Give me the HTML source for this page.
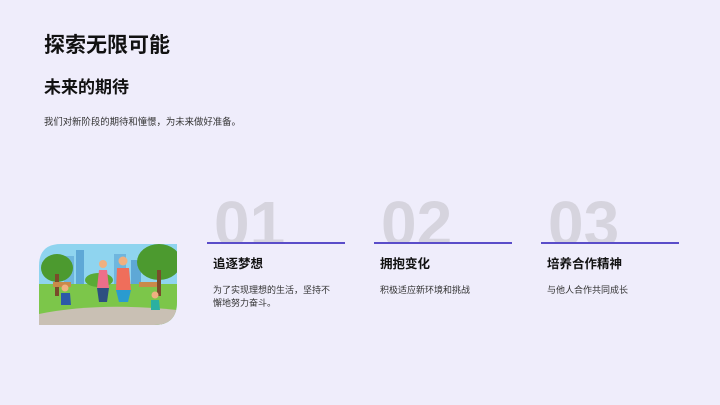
<!DOCTYPE html>
<html><head><meta charset="utf-8"><style>
body{margin:0;width:720px;height:405px;background:#efedfb;font-family:"Liberation Sans","Noto Sans CJK SC",sans-serif;position:relative;overflow:hidden;color:#111}
.a{position:absolute;white-space:nowrap}
h1{position:absolute;left:44px;top:31px;margin:0;font-size:21px;font-weight:bold;line-height:30px}
h2{position:absolute;left:44px;top:76px;margin:0;font-size:17px;font-weight:bold;line-height:24px}
.sub{left:44px;top:114px;font-size:9.4px;color:#333}
.col{position:absolute;top:190px;width:138px;height:130px}
.num{position:absolute;left:7px;top:4px;font-size:64px;font-weight:bold;color:#d6d4de;line-height:60px;height:48px;overflow:hidden;letter-spacing:0px}
.line{position:absolute;left:0;top:52px;width:138px;height:2px;background:#5a4dc9}
.t{position:absolute;left:6px;top:66px;font-size:12.5px;font-weight:bold;line-height:16px;white-space:nowrap}
.d{position:absolute;left:6px;top:94px;font-size:9px;line-height:13px;color:#333;width:125px}
</style></head><body>
<h1>探索无限可能</h1>
<h2>未来的期待</h2>
<div class="a sub">我们对新阶段的期待和憧憬，为未来做好准备。</div>

<svg style="position:absolute;left:39px;top:244px" width="138" height="81" viewBox="0 0 138 81">
<defs><clipPath id="c"><path d="M22 0H138V58Q138 81 115 81H0V22Q0 0 22 0Z"/></clipPath></defs>
<g clip-path="url(#c)">
<rect width="138" height="81" fill="#8fd4ef"/>
<rect x="25" y="12" width="10" height="30" fill="#6fb6de"/><rect x="37" y="6" width="8" height="36" fill="#5ea8d6"/><rect x="75" y="10" width="12" height="32" fill="#6fb6de"/><rect x="92" y="16" width="10" height="26" fill="#5ea8d6"/>
<rect x="0" y="40" width="138" height="41" fill="#7cc64a"/>
<ellipse cx="18" cy="24" rx="16" ry="14" fill="#4c9a2f"/><rect x="16" y="30" width="4" height="22" fill="#7a4b2a"/>
<ellipse cx="120" cy="18" rx="22" ry="18" fill="#4c9a2f"/><rect x="118" y="26" width="4" height="26" fill="#7a4b2a"/>
<ellipse cx="60" cy="36" rx="14" ry="7" fill="#5aaa35"/>
<path d="M0 70Q60 58 138 66V81H0Z" fill="#c9c0b4"/>
<rect x="14" y="38" width="18" height="5" fill="#c98a4a"/><rect x="100" y="38" width="18" height="5" fill="#c98a4a"/>
<circle cx="64" cy="20" r="4" fill="#f0b080"/><path d="M60 26h8l2 18h-12z" fill="#ec6f8a"/><path d="M58 44h12l-2 14h-8z" fill="#2e4f80"/>
<circle cx="84" cy="17" r="4.5" fill="#f0b080"/><path d="M78 24h12l2 22h-15z" fill="#ef6e5b"/><path d="M77 46h15l-3 12h-9z" fill="#2a9bd0"/>
<circle cx="26" cy="44" r="3.5" fill="#f0b080"/><path d="M22 49h9l1 12h-10z" fill="#2c5aa8"/>
<circle cx="116" cy="51" r="3.5" fill="#f0b080"/><path d="M112 56h8l1 10h-9z" fill="#2bb0a0"/>
</g></svg>

<div class="col" style="left:207px"><div class="num">01</div><div class="line"></div><div class="t">追逐梦想</div><div class="d">为了实现理想的生活，坚持不懈地努力奋斗。</div></div>
<div class="col" style="left:374px"><div class="num">02</div><div class="line"></div><div class="t">拥抱变化</div><div class="d">积极适应新环境和挑战</div></div>
<div class="col" style="left:541px"><div class="num">03</div><div class="line"></div><div class="t">培养合作精神</div><div class="d">与他人合作共同成长</div></div>
</body></html>
